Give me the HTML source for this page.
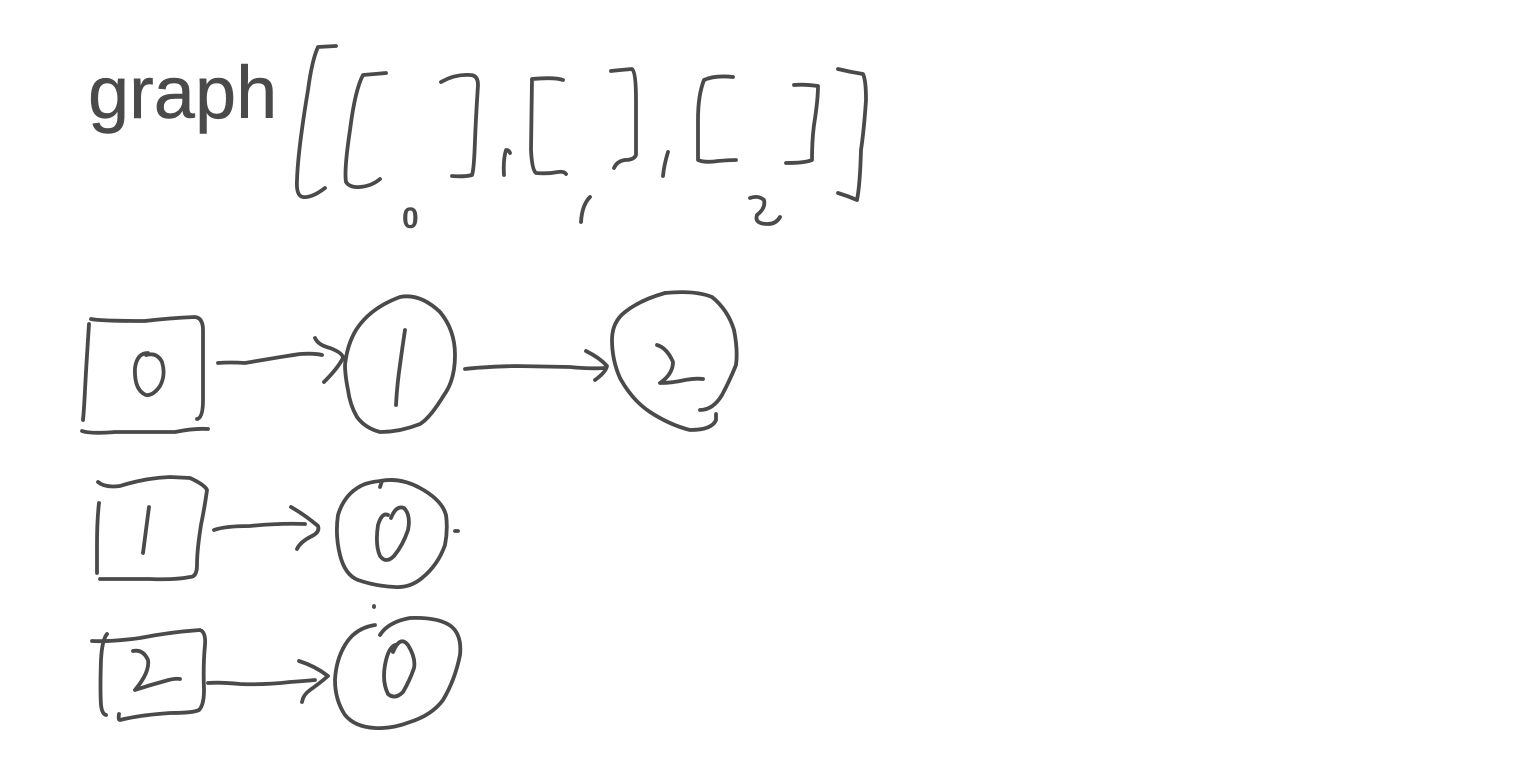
<!DOCTYPE html>
<html><head><meta charset="utf-8"><style>
html,body{margin:0;padding:0;background:#fff;width:1536px;height:758px;overflow:hidden}
svg{display:block}
text{font-family:"Liberation Sans",sans-serif;fill:#4a4a4a}
</style></head><body>
<svg width="1536" height="758" viewBox="0 0 1536 758" fill="none" stroke="#4a4a4a" stroke-width="3.8" stroke-linecap="round" stroke-linejoin="round">
<text x="88" y="118" font-size="74" stroke="#4a4a4a" stroke-width="0.5">graph</text>
<path d="M336 46 L318 47 Q312 60 308 90 Q298 150 297 180 Q296 196 303 197 Q312 198 325 188"/>
<path d="M386 73 L363 75 Q355 90 350 130 Q344 170 346 182 Q350 188 360 187 Q372 186 380 179"/>
<path d="M441 82 Q455 74 470 75 Q478 75 478 85 Q476 115 475 140 Q474 170 472 175 Q465 177 452 176"/>
<text x="402" y="228" font-size="30" stroke="none" font-weight="bold">0</text>
<path d="M504 175 Q503 160 506 150 Q509 150 510 153"/>
<path d="M563 80 Q555 77 532 79 L531 150 Q532 170 536 173 Q548 174 558 172 Q564 171 566 174"/>
<path d="M611 71 Q620 70 632 69 Q636 72 636 100 L636 155 Q634 160 625 160 Q617 161 614 168"/>
<path d="M581 222 Q582 205 590 197"/>
<path d="M663 176 Q664 165 668 152"/>
<path d="M733 77 Q715 75 704 80 Q698 95 698 120 L698 160 Q705 163 718 161 Q730 160 736 160"/>
<path d="M794 85 Q805 84 818 86 Q818 100 814 125 Q812 140 812 160 Q805 163 786 163"/>
<path d="M750 198 Q758 195 764 200 Q766 208 757 215 Q754 224 768 224 Q776 224 780 217"/>
<path d="M838 69 Q850 72 863 74 Q866 80 866 100 Q864 130 861 150 Q860 185 857 200 Q848 196 838 193"/>
<path d="M89 324 Q86 370 85 390 Q84 410 83 420"/>
<path d="M91 319 Q100 321 145 321 Q170 318 195 317 Q203 318 203 330 L203 400 Q203 418 197 419"/>
<path d="M82 431 Q90 434 115 432 L175 432 Q195 428 208 429"/>
<path d="M148 353 Q137 353 135 368 Q134 390 146 395 Q153 396 160 386 Q166 375 162 362 Q157 352 146 355"/>
<path d="M218 363 Q230 362 245 363 Q280 357 300 354 Q315 353 322 355"/>
<path d="M315 338 Q318 345 330 348 Q343 353 343 358 Q338 368 324 382"/>
<path d="M400 297 Q420 293 440 312 Q455 330 455 355 Q455 380 444 395 Q430 418 420 424 Q400 432 380 432 Q365 428 357 417 Q350 405 348 390 Q345 375 345 365 Q347 345 356 330 Q370 308 400 297"/>
<path d="M405 330 Q402 350 400 365 Q397 385 396 405"/>
<path d="M465 369 Q480 367 515 366 L570 367 Q590 369 605 368"/>
<path d="M586 351 Q600 358 607 366 Q606 372 595 380"/>
<path d="M665 293 Q695 290 712 297 Q728 310 734 330 Q738 350 736 365 Q730 380 722 395 Q713 410 700 410"/>
<path d="M665 293 Q640 300 625 312 Q612 322 612 340 Q612 360 620 378 Q632 400 650 412 Q670 425 690 430 Q712 430 716 420 L716 414"/>
<path d="M657 345 Q667 348 673 362 Q673 374 660 383 Q672 383 685 380 Q695 378 703 379"/>
<path d="M99 503 Q97 520 97 545 L97 573"/>
<path d="M98 482 Q105 488 120 486 Q145 478 170 477 L190 478 Q205 485 207 490 Q205 505 201 525 Q197 550 197 565 Q197 577 190 577 Q175 580 150 579 L100 579"/>
<path d="M149 507 Q146 530 143 553"/>
<path d="M214 530 Q225 526 250 526 Q280 523 305 524"/>
<path d="M291 507 Q305 515 318 526 Q320 532 312 536 Q300 542 297 549"/>
<path d="M380 481 Q400 477 420 488 Q442 500 446 515 Q448 530 445 545 Q438 565 422 578 Q410 588 395 587 Q375 586 358 580 Q345 575 340 555 Q335 535 338 515 Q345 492 365 484 Q375 481 382 481 L380 487"/>
<path d="M388 515 Q382 512 378 525 Q375 545 380 556 Q386 564 394 556 Q403 545 408 530 Q411 515 404 508 Q396 505 391 518"/>
<path d="M455 531 L458 531"/>
<path d="M107 634 Q102 640 101 660 Q100 690 101 705 Q102 714 106 715"/>
<path d="M92 641 Q110 642 140 638 Q170 632 200 630 Q206 632 205 645 Q203 665 204 690 Q204 705 199 710 Q193 713 170 713 Q140 715 120 720 Q118 720 119 714"/>
<path d="M133 651 Q143 649 148 660 Q150 672 135 690 Q150 685 165 681 Q175 678 180 679"/>
<path d="M208 683 Q220 682 240 684 Q265 685 290 682 Q305 681 315 680"/>
<path d="M299 661 Q315 666 328 676 Q320 683 310 690 Q303 695 302 702"/>
<path d="M380 635 Q388 622 410 618 Q440 617 452 627 Q462 636 460 655 Q455 680 443 700 Q432 715 410 722 Q392 729 375 728 Q355 727 345 715 Q335 700 335 680 Q336 660 345 645 Q355 628 375 625"/>
<path d="M395 645 Q388 648 385 665 Q382 682 388 694 Q395 700 403 692 Q410 680 414 668 Q416 658 408 645 Q400 635 393 652"/>
<path d="M374 606 L374 607"/>
</svg>
</body></html>
